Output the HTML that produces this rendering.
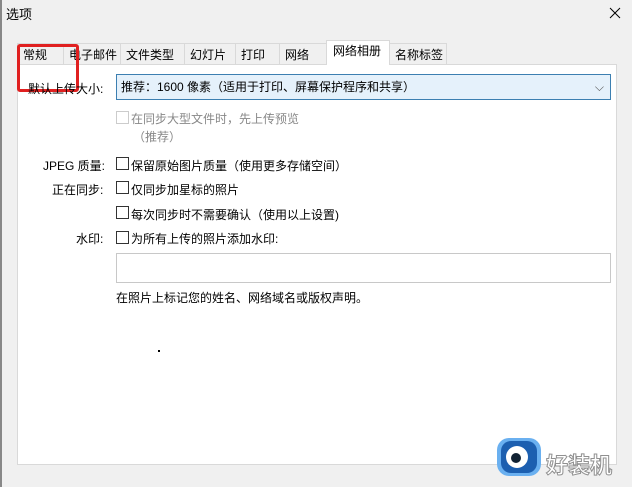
<html><head><style>
body{margin:0;width:632px;height:487px;background:#f0f0f0;font-family:"Liberation Sans","Noto Sans CJK SC",sans-serif;font-size:12px;color:#000;position:relative;overflow:hidden}
.a{position:absolute;white-space:nowrap}
.tab{position:absolute;top:43px;height:21px;border:1px solid #d9d9d9;border-bottom:none;background:#f0f0f0;line-height:22px;padding-left:5px;box-sizing:border-box}
.cb{position:absolute;width:11px;height:11px;border:1px solid #333;background:#fff}
</style></head><body>
<div class="a" style="left:0;top:0;width:2px;height:487px;background:#888"></div>
<div class="a" style="left:6px;top:4px;font-size:13px">选项</div>
<svg class="a" style="left:609px;top:7px" width="12" height="12"><path d="M1 1L11 11M11 1L1 11" stroke="#000" stroke-width="1"/></svg>
<div class="a" style="left:17px;top:64px;width:600px;height:401px;background:#fff;border:1px solid #d9d9d9;box-sizing:border-box"></div>
<div class="tab" style="left:17px;width:47px">常规</div>
<div class="tab" style="left:63px;width:58px">电子邮件</div>
<div class="tab" style="left:120px;width:65px">文件类型</div>
<div class="tab" style="left:184px;width:52px">幻灯片</div>
<div class="tab" style="left:235px;width:45px">打印</div>
<div class="tab" style="left:279px;width:48px">网络</div>
<div class="tab" style="left:326px;top:40px;height:25px;width:64px;background:#fff;line-height:21px;padding-left:6px">网络相册</div>
<div class="tab" style="left:389px;width:58px;padding-left:5px">名称标签</div>
<div class="a" style="left:17px;top:44px;width:56px;height:42px;border:3px solid #e02020;border-radius:3px"></div>
<div class="a" style="left:28px;top:80px">默认上传大小:</div>
<div class="a" style="left:116px;top:74px;width:495px;height:26px;border:1px solid #3c7fb1;background:#e5f1fb;box-sizing:border-box;line-height:25px;padding-left:4px">推荐：1600 像素（适用于打印、屏幕保护程序和共享）<span style="position:absolute;right:6px;color:#555">⌵</span></div>
<div class="cb" style="left:116px;top:111px;border-color:#ccc"></div>
<div class="a" style="left:131px;top:110px;color:#888">在同步大型文件时，先上传预览</div>
<div class="a" style="left:133px;top:128px;color:#888">（推荐）</div>
<div class="a" style="left:43px;top:157px">JPEG 质量:</div>
<div class="cb" style="left:116px;top:157px"></div>
<div class="a" style="left:131px;top:157px">保留原始图片质量（使用更多存储空间）</div>
<div class="a" style="left:52px;top:181px">正在同步:</div>
<div class="cb" style="left:116px;top:181px"></div>
<div class="a" style="left:131px;top:181px">仅同步加星标的照片</div>
<div class="cb" style="left:116px;top:206px"></div>
<div class="a" style="left:131px;top:206px">每次同步时不需要确认（使用以上设置)</div>
<div class="a" style="left:76px;top:230px">水印:</div>
<div class="cb" style="left:116px;top:231px"></div>
<div class="a" style="left:131px;top:230px">为所有上传的照片添加水印:</div>
<div class="a" style="left:116px;top:253px;width:495px;height:30px;border:1px solid #c8c8c8;box-sizing:border-box;background:#fff"></div>
<div class="a" style="left:116px;top:289px">在照片上标记您的姓名、网络域名或版权声明。</div>
<div class="a" style="left:158px;top:350px;width:2px;height:2px;background:#000"></div>
<svg class="a" style="left:495px;top:436px" width="50" height="44" viewBox="0 0 50 44"><rect x="2" y="2" width="44" height="38" rx="12" fill="#6ab0f0"/><rect x="6" y="5" width="36" height="32" rx="10" fill="#1c5fb0"/><circle cx="22" cy="21" r="11" fill="#fff"/><circle cx="21" cy="22" r="5" fill="#123"/></svg>
<div class="a" style="left:546px;top:448px;font-size:22px;color:#fff;-webkit-text-stroke:1px #909090;font-weight:bold">好装机</div>
</body></html>
